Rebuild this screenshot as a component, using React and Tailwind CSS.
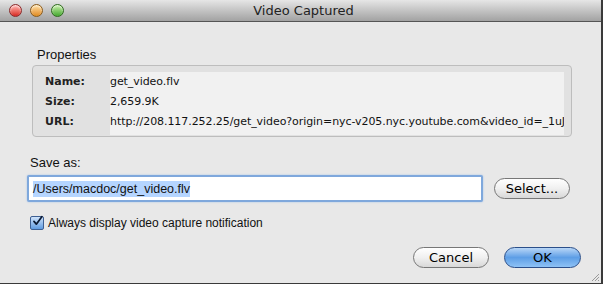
import React, { useState } from 'react';

const dejavu = { fontFamily: '"DejaVu Sans", "Liberation Sans", sans-serif' };
const arial = { fontFamily: '"Liberation Sans", Arial, sans-serif' };

const Light = ({ from, to, ring }) => (
  <span
    className={`block h-[13px] w-[13px] rounded-full border ${ring} bg-gradient-to-b ${from} ${to} shadow-[inset_0_1px_2px_rgba(255,255,255,0.7)]`}
  />
);

const PillButton = ({ children, primary, className = '' }) => (
  <button
    className={`h-[21px] rounded-full border text-[13px] leading-none ${
      primary
        ? 'border-[#2b4f8a] bg-gradient-to-b from-[#b8d6f6] via-[#5d9ee6] to-[#8ec2f5] text-black'
        : 'border-[#777] bg-gradient-to-b from-[#ffffff] via-[#f0f0f0] to-[#d8d8d8] text-black'
    } ${className}`}
  >
    {children}
  </button>
);

const Row = ({ label, value, last }) => (
  <div className={`flex items-stretch ${last ? 'h-[23px]' : 'h-[20px]'}`}>
    <div className={`flex w-[77px] shrink-0 items-center pl-[12px] text-[11px] font-bold text-[#222] ${last ? 'pb-[3px]' : ''}`}>
      {label}
    </div>
    <div
      className={`flex flex-1 items-center overflow-hidden whitespace-nowrap bg-[#f1f1f1] text-[11px] tracking-[-0.07px] text-[#111] ${last ? 'pb-[3px]' : ''}`}
    >
      {value}
    </div>
  </div>
);

export default function App() {
  const [always, setAlways] = useState(true);

  return (
    <div className="h-[284px] w-[603px] overflow-hidden bg-[#3a3a3a]" style={dejavu}>
      <div className="relative flex h-[283px] w-[601px] flex-col bg-[#e8e8e8]">
        {/* title bar */}
        <div className="relative flex h-[22px] shrink-0 items-center border-b border-[#555] bg-gradient-to-b from-[#e6e6e6] to-[#a2a2a2]">
          <div className="flex gap-[8px] pl-[9px]">
            <Light from="from-[#ffb3b3]" to="to-[#d61a1a]" ring="border-[#8a2a2a]" />
            <Light from="from-[#ffe0a0]" to="to-[#e08a10]" ring="border-[#8a5a1a]" />
            <Light from="from-[#c8f0a8]" to="to-[#3ea82a]" ring="border-[#2e6a1e]" />
          </div>
          <div className="absolute inset-0 flex items-center justify-center text-[13px] text-[#222]">
            <span className="pl-[6px]">Video Captured</span>
          </div>
        </div>

        {/* body */}
        <div className="flex flex-col pl-[27px] pr-[20px]">
          <div className="pl-[10px] pt-[25px] text-[13px] leading-[16px] text-[#111]" style={arial}>
            Properties
          </div>
          <div className="ml-[5px] mt-[2px] w-[540px] self-start rounded-[4px] border border-[#bdbdbd] bg-[#e1e1e1] pb-[1px] pr-[7px] pt-[6px]">
            <Row label="Name:" value="get_video.flv" />
            <Row label="Size:" value="2,659.9K" />
            <Row label="URL:" value="http://208.117.252.25/get_video?origin=nyc-v205.nyc.youtube.com&video_id=_1uJ" last />
          </div>

          <div className="pl-[3px] pt-[18px] text-[13px] leading-[16px] text-[#111]" style={arial}>
            Save as:
          </div>
          <div className="mt-[4px] flex items-center">
            <div className="flex h-[27px] w-[456px] items-center rounded-[2px] border-2 border-[#7fa8dc] bg-white px-[4px] shadow-[0_0_2px_#9ec0ea]">
              <span className="bg-[#b5d5ff] text-[12.5px] leading-[16px] text-[#111]" style={arial}>
                /Users/macdoc/get_video.flv
              </span>
            </div>
            <PillButton className="ml-[11px] w-[76px]">Select...</PillButton>
          </div>

          <label className="mt-[13px] flex h-[15px] items-center gap-[4px] pl-[3px]" onClick={() => setAlways(!always)}>
            <span className="flex h-[14px] w-[14px] items-center justify-center rounded-[2px] border border-[#3d5f92] bg-gradient-to-b from-[#cfe3fa] to-[#5f9be0]">
              {always && (
                <svg width="14" height="14" viewBox="0 0 14 14" className="-mt-[3px] ml-[1px]">
                  <path d="M2.5 7.5 L5.5 11 L12.5 1.5" fill="none" stroke="#0b1a33" strokeWidth="2.2" strokeLinecap="round" strokeLinejoin="round" />
                </svg>
              )}
            </span>
            <span className="text-[12px] text-[#111]" style={arial}>
              Always display video capture notification
            </span>
          </label>

          <div className="mt-[17px] flex justify-end gap-[15px]">
            <PillButton className="w-[76px]">Cancel</PillButton>
            <PillButton primary className="w-[77px]">OK</PillButton>
          </div>
        </div>

        {/* resize grip */}
        <svg width="10" height="10" viewBox="0 0 10 10" className="absolute bottom-[1px] right-[1px]">
          <path d="M9 2 L2 9 M9 5 L5 9 M9 8 L8 9" stroke="#9a9a9a" strokeWidth="1" />
        </svg>
      </div>
    </div>
  );
}
